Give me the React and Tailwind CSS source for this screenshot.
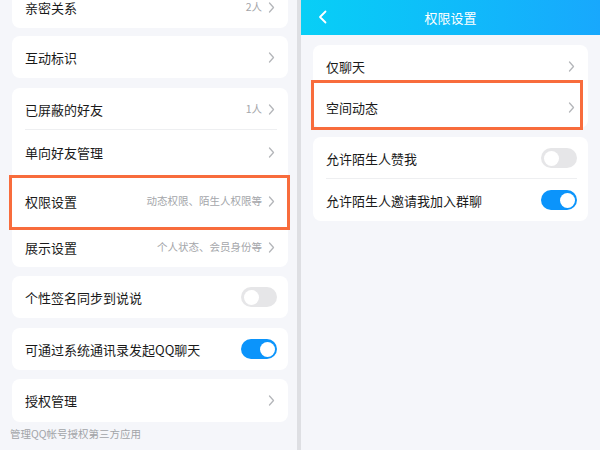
import React from "react";

const font = { fontFamily: '"Noto Sans CJK SC", "Noto Sans", sans-serif' };

function Chevron() {
  return (
    <svg width="7" height="11" viewBox="0 0 7 11" className="shrink-0">
      <polyline points="1.5,1 5.5,5.5 1.5,10" fill="none" stroke="#b4b6ba" strokeWidth="1.3" strokeLinecap="round" strokeLinejoin="round" />
    </svg>
  );
}

function Toggle({ on }) {
  return (
    <div className={"w-[36px] h-[20px] mr-[-2px] rounded-full flex items-center px-[2.5px] " + (on ? "bg-[#0b94fb] justify-end" : "bg-[#e6e6e8] justify-start")}>
      <div className="w-[15px] h-[15px] rounded-full bg-white" />
    </div>
  );
}

function Row({ label, sub, h = "h-[42px]", toggle, divider, children }) {
  return (
    <div className={"relative flex items-center px-[13px] " + h}>
      <span className="text-[13px] text-[#1a1a1a] leading-none">{label}</span>
      <div className="flex-1" />
      {sub && <span className="text-[10.5px] text-[#a4a6aa] mr-[6px] leading-none">{sub}</span>}
      {toggle === undefined ? <Chevron /> : <Toggle on={toggle} />}
      {divider && <div className="absolute left-[13px] right-[11px] bottom-0 h-px bg-[#eeeff1]" />}
      {children}
    </div>
  );
}

function Highlight({ cls }) {
  return <div className={"absolute border-[3px] border-[#f86c3c] pointer-events-none " + cls} />;
}

export default function App() {
  return (
    <div className="w-[600px] h-[450px] flex overflow-hidden bg-[#f5f6fa]" style={font}>
      <div className="w-[297px] h-full bg-[#f5f6fa] pl-[12px] pr-[9px] flex flex-col">
        <div className="bg-white rounded-[8px] mt-[-14px]">
          <Row label="亲密关系" sub="2人" />
        </div>
        <div className="bg-white rounded-[8px] mt-[8px]">
          <Row label="互动标识" />
        </div>
        <div className="bg-white rounded-[8px] mt-[10px]">
          <Row label="已屏蔽的好友" sub="1人" divider />
          <Row label="单向好友管理" h="h-[44px]" />
          <Row label="权限设置" sub="动态权限、陌生人权限等" h="h-[54px]">
            <Highlight cls="left-[-3px] top-[1px] w-[281px] h-[55px]" />
          </Row>
          <Row label="展示设置" sub="个人状态、会员身份等" h="h-[39px]" />
        </div>
        <div className="bg-white rounded-[8px] mt-[9px]">
          <Row label="个性签名同步到说说" toggle={false} />
        </div>
        <div className="bg-white rounded-[8px] mt-[10px]">
          <Row label="可通过系统通讯录发起QQ聊天" toggle={true} />
        </div>
        <div className="bg-white rounded-[8px] mt-[9px]">
          <Row label="授权管理" h="h-[43px]" />
        </div>
        <div className="text-[10.5px] text-[#a2a4a8] mt-[7px] ml-[-2px] leading-none">管理QQ帐号授权第三方应用</div>
      </div>
      <div className="w-[4px] h-full bg-[#dedfe3]" />
      <div className="flex-1 h-full bg-[#f5f6fa] flex flex-col">
        <div className="h-[35px] relative flex items-center justify-center bg-linear-to-r from-[#08cff6] to-[#18a8fd]">
          <svg width="10" height="14" viewBox="0 0 10 14" className="absolute left-[17px] top-[10px]">
            <polyline points="7.5,1.5 2,7 7.5,12.5" fill="none" stroke="white" strokeWidth="1.8" strokeLinecap="round" strokeLinejoin="round" />
          </svg>
          <span className="text-white text-[13px] leading-none">权限设置</span>
        </div>
        <div className="px-[12px] pt-[10px] flex flex-col">
          <div className="bg-white rounded-[8px]">
            <Row label="仅聊天" />
            <Row label="空间动态" h="h-[41px]">
              <Highlight cls="left-[-2px] top-[-7px] w-[272px] h-[50px]" />
            </Row>
          </div>
          <div className="bg-white rounded-[8px] mt-[9px]">
            <Row label="允许陌生人赞我" toggle={false} divider />
            <Row label="允许陌生人邀请我加入群聊" toggle={true} />
          </div>
        </div>
      </div>
    </div>
  );
}
